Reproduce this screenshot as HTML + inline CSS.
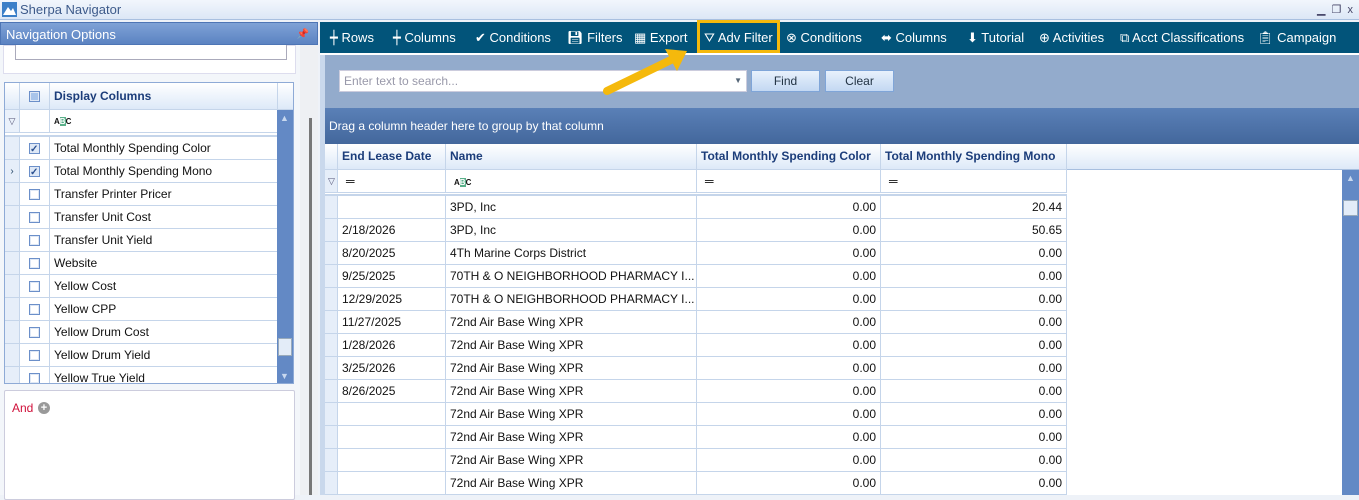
<!DOCTYPE html><html><head><meta charset="utf-8"><style>
*{box-sizing:border-box;margin:0;padding:0}
body{width:1359px;height:495px;overflow:hidden;font-family:"Liberation Sans",Arial,sans-serif;font-size:12px;background:#eef2f8;position:relative}
.abs{position:absolute}
.title{left:0;top:0;width:1359px;height:20px;background:linear-gradient(#f2f6fc,#dce7f6);border-bottom:1px solid #a9c0e0;color:#3d5a8a;font-size:13px;line-height:20px;padding-left:20px}
.navh{left:0;top:22px;width:318px;height:23px;background:linear-gradient(#7fa2d6,#5b83c2);color:#fff;font-size:13px;line-height:23px;padding-left:5px;border:1px solid #4d75b5}
.tb{left:320px;top:22px;width:1039px;height:31px;background:#02547a;color:#fff;font-size:13px}
.tb span{position:absolute;top:8px;white-space:nowrap}
.cell{position:absolute;border-right:1px solid #c5d5ea;border-bottom:1px solid #c5d5ea;height:23px;line-height:23px;white-space:nowrap;overflow:hidden;font-size:12px;color:#111}
.cb{display:inline-block;width:11px;height:11px;border:1px solid #6b8fc9;background:#fff;box-shadow:inset 0 0 0 1px #dfe8f5;vertical-align:middle;position:relative}
.hdr{color:#1c3d7a;font-weight:bold;background:linear-gradient(#fff,#dde9f8)}
</style></head><body>
<div class="abs title">Sherpa Navigator<span class="abs" style="right:6px;top:0;font-size:11px;color:#446">▁ &nbsp;❐ &nbsp;x</span></div>
<svg class="abs" style="left:2px;top:2px" width="15" height="15"><rect width="15" height="15" fill="#3b7fc8"/><path d="M1 13 L6 5 L9 9 L11 6 L14 13Z" fill="#fff"/></svg>
<div class="abs navh">Navigation Options<span class="abs" style="right:8px;top:0;font-size:10px">📌</span></div>
<div class="abs" style="left:0;top:45px;width:300px;height:450px;background:#f3f6fa"></div>
<div class="abs" style="left:3px;top:45px;width:293px;height:29px;background:#fff;border:1px solid #dde"></div>
<div class="abs" style="left:15px;top:45px;width:272px;height:15px;background:#fff;border:1px solid #aab;border-top:none"></div>
<!-- left grid -->
<div class="abs" style="left:4px;top:82px;width:290px;height:302px;background:#fff;border:1px solid #8eaad6;overflow:hidden">
 <div class="cell hdr" style="left:0;top:0;width:15px;height:27px"></div>
 <div class="cell hdr" style="left:15px;top:0;width:30px;height:27px;text-align:center;line-height:27px"><span class="cb" style="background:#a8c4ea"></span></div>
 <div class="cell hdr" style="left:45px;top:0;width:228px;height:27px;line-height:27px;padding-left:4px">Display Columns</div>
 <div class="cell hdr" style="left:273px;top:0;width:17px;height:27px"></div>
 <div class="cell" style="left:0;top:27px;width:15px;background:#eaf1fb;font-size:9px;color:#557;text-align:center">▽</div>
 <div class="cell" style="left:15px;top:27px;width:30px"></div>
 <div class="cell" style="left:45px;top:27px;width:228px;padding-left:4px;font-size:8px;font-weight:bold">A<span style="background:#5ab08a;color:#fff">B</span>C</div>
 <div class="abs" style="left:0;top:50px;width:273px;height:4px;border-bottom:2px solid #c5d5ea"></div>
 <div id="lrows"></div>
 <div class="abs" style="left:272px;top:27px;width:17px;height:274px;background:#6389c5"><div class="abs" style="left:1px;top:228px;width:14px;height:18px;background:#e3ecf8;border:1px solid #9ab"></div><div class="abs" style="left:3px;top:3px;color:#c8d8ef;font-size:9px">▲</div><div class="abs" style="left:3px;bottom:3px;color:#c8d8ef;font-size:9px">▼</div></div>
</div>
<div class="abs" style="left:4px;top:390px;width:291px;height:110px;background:#fff;border:1px solid #ccd;border-radius:2px"><span class="abs" style="left:7px;top:10px;color:#d0103a">And</span><span class="abs" style="left:33px;top:11px;width:12px;height:12px;border-radius:6px;background:#999;color:#fff;font-size:11px;line-height:12px;text-align:center;font-weight:bold">+</span></div>
<div class="abs" style="left:300px;top:45px;width:18px;height:450px;background:#eef0f3"></div>
<div class="abs" style="left:309px;top:118px;width:3px;height:377px;background:#777"></div>
<!-- toolbar -->
<div class="abs tb">
<span style="left:10px">┿ Rows</span><span style="left:73px">┿ Columns</span><span style="left:155px">✔ Conditions</span><span style="left:247px">💾︎ Filters</span><span style="left:314px">▦ Export</span>
<span style="left:384px">⛛ Adv Filter</span><span style="left:466px">⊗ Conditions</span><span style="left:561px">⬌ Columns</span><span style="left:647px">⬇ Tutorial</span><span style="left:719px">⊕ Activities</span><span style="left:800px">⧉ Acct Classifications</span><span style="left:937px">📋︎ Campaign</span>
</div>
<div class="abs" style="left:697px;top:20px;width:83px;height:33px;border:3px solid #f5b90c"></div>
<div class="abs" style="left:320px;top:53px;width:1039px;height:2px;background:#fff"></div>
<div class="abs" style="left:320px;top:55px;width:1039px;height:440px;background:#fff;border-left:5px solid #c9d8ec"></div>
<div class="abs" style="left:325px;top:55px;width:1034px;height:53px;background:#93abcc"></div>
<div class="abs" style="left:339px;top:70px;width:408px;height:22px;background:#fff;border:1px solid #ccd;color:#99a;padding-left:4px;line-height:20px">Enter text to search...<span class="abs" style="right:4px;top:0;font-size:8px;color:#567">▼</span></div>
<div class="abs" style="left:751px;top:70px;width:69px;height:22px;border:1px solid #7fa5d8;background:linear-gradient(#e8f1fc,#c3d8f2);text-align:center;line-height:20px;color:#234">Find</div>
<div class="abs" style="left:825px;top:70px;width:69px;height:22px;border:1px solid #7fa5d8;background:linear-gradient(#e8f1fc,#c3d8f2);text-align:center;line-height:20px;color:#234">Clear</div>
<div class="abs" style="left:325px;top:108px;width:1034px;height:36px;background:linear-gradient(#5a80b7,#43679c);color:#fff;padding:11px 0 0 4px">Drag a column header here to group by that column</div>
<svg class="abs" style="left:595px;top:45px" width="100" height="55"><path d="M12 46 L80 13" stroke="#f5b90c" stroke-width="8" stroke-linecap="round"/><path d="M92 6 L70 4 L82 26Z" fill="#f5b90c"/></svg>
<div id="grid" class="abs" style="left:325px;top:144px;width:1034px;height:351px;overflow:hidden">
 <div class="abs hdr" style="left:0;top:0;width:1034px;height:26px;border-bottom:1px solid #a7bfdf"></div>
</div>
<div class="abs" style="left:1342px;top:170px;width:17px;height:325px;background:#6389c5"><div class="abs" style="left:1px;top:30px;width:15px;height:16px;background:#e3ecf8;border:1px solid #9ab"></div><div class="abs" style="left:4px;top:3px;color:#c8d8ef;font-size:9px">▲</div></div>
<script>
var L=["Total Monthly Spending Color","Total Monthly Spending Mono","Transfer Printer Pricer","Transfer Unit Cost","Transfer Unit Yield","Website","Yellow Cost","Yellow CPP","Yellow Drum Cost","Yellow Drum Yield","Yellow True Yield"],h="";
L.forEach(function(t,i){var y=54+i*23;h+='<div class="cell" style="left:0;top:'+y+'px;width:15px;background:#e6eef9;color:#246;font-size:10px;text-align:center">'+(i==1?'›':'')+'</div><div class="cell" style="left:15px;top:'+y+'px;width:30px;text-align:center"><span class="cb" style="'+(i<2?'background:#dde8f7':'')+'">'+(i<2?'<b style="position:absolute;left:0;top:-6px;font-size:10px;color:#2a4f8f">✓</b>':'')+'</span></div><div class="cell" style="left:45px;top:'+y+'px;width:228px;padding-left:4px">'+t+'</div>';});
document.getElementById('lrows').outerHTML=h;
var X=[0,13,121,372,556,742],g="";
var H=["","End Lease Date","Name","Total Monthly Spending Color","Total Monthly Spending Mono"];
for(var c=0;c<5;c++){g+='<div class="cell hdr" style="left:'+X[c]+'px;top:0;width:'+(X[c+1]-X[c])+'px;height:26px;line-height:24px;padding-left:4px">'+H[c]+'</div>';
g+='<div class="cell" style="left:'+X[c]+'px;top:26px;width:'+(X[c+1]-X[c])+'px;padding-left:'+(c?8:3)+'px;'+(c==0?'background:#e6eef9;font-size:9px;color:#557':'')+'">'+(c==0?'▽':c==2?'<span style="font-size:8px;font-weight:bold">A<span style="background:#5ab08a;color:#fff">B</span>C</span>':'<b>═</b>')+'</div>';}
g+='<div class="abs" style="left:0;top:49px;width:742px;height:3px;border-bottom:2px solid #c5d5ea"></div>';
var R=[["","3PD, Inc","20.44"],["2/18/2026","3PD, Inc","50.65"],["8/20/2025","4Th Marine Corps District"],["9/25/2025","70TH &amp; O NEIGHBORHOOD PHARMACY I..."],["12/29/2025","70TH &amp; O NEIGHBORHOOD PHARMACY I..."],["11/27/2025","72nd Air Base Wing XPR"],["1/28/2026","72nd Air Base Wing XPR"],["3/25/2026","72nd Air Base Wing XPR"],["8/26/2025","72nd Air Base Wing XPR"],["","72nd Air Base Wing XPR"],["","72nd Air Base Wing XPR"],["","72nd Air Base Wing XPR"],["","72nd Air Base Wing XPR"]];
R.forEach(function(r,i){var y=52+i*23,v=[ '',r[0],r[1],'0.00',r[2]||'0.00'];for(var c=0;c<5;c++)g+='<div class="cell" style="left:'+X[c]+'px;top:'+y+'px;width:'+(X[c+1]-X[c])+'px;padding:0 4px;'+(c==0?'background:#e6eef9;':'')+(c>2?'text-align:right':'')+'">'+v[c]+'</div>';});
document.getElementById('grid').insertAdjacentHTML('beforeend',g);
</script>
</body></html>
